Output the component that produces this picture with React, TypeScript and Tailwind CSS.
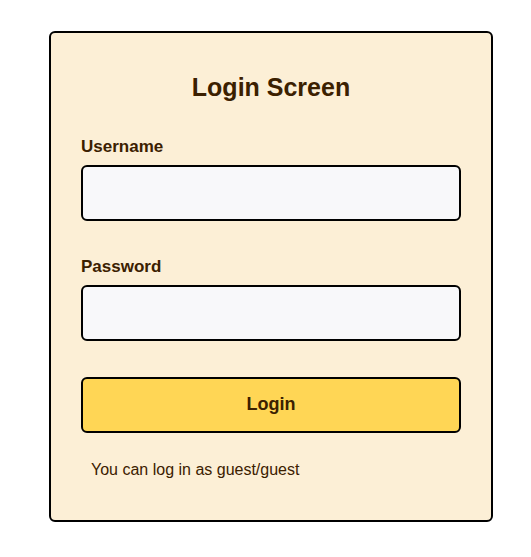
export default function App() {
  return (
    <div className="w-[531px] h-[557px] bg-white" style={{ fontFamily: '"Liberation Sans", Arial, sans-serif' }}>
      <div className="pt-[31px] pl-[49px]">
        <div className="w-[444px] border-2 border-black rounded-[6px] bg-[#fcefd6] px-[30px] pt-[40px] pb-[40px] text-[#3b2000]">
          <h1 className="text-[25px] leading-[28px] font-bold text-center">Login Screen</h1>
          <div className="mt-[36px]">
            <label className="block text-[17px] leading-[20px] font-bold">Username</label>
            <input className="mt-[8px] block w-full h-[56px] border-2 border-black rounded-[6px] bg-[#f8f8fa] px-3 outline-none" />
          </div>
          <div className="mt-[36px]">
            <label className="block text-[17px] leading-[20px] font-bold">Password</label>
            <input type="password" className="mt-[8px] block w-full h-[56px] border-2 border-black rounded-[6px] bg-[#f8f8fa] px-3 outline-none" />
          </div>
          <button className="mt-[36px] block w-full h-[56px] pb-[2px] border-2 border-black rounded-[6px] bg-[#ffd655] text-[18px] font-bold text-[#3b2000]">Login</button>
          <p className="mt-[27px] pl-[10px] text-[16px] leading-[20px]">You can log in as guest/guest</p>
        </div>
      </div>
    </div>
  );
}
